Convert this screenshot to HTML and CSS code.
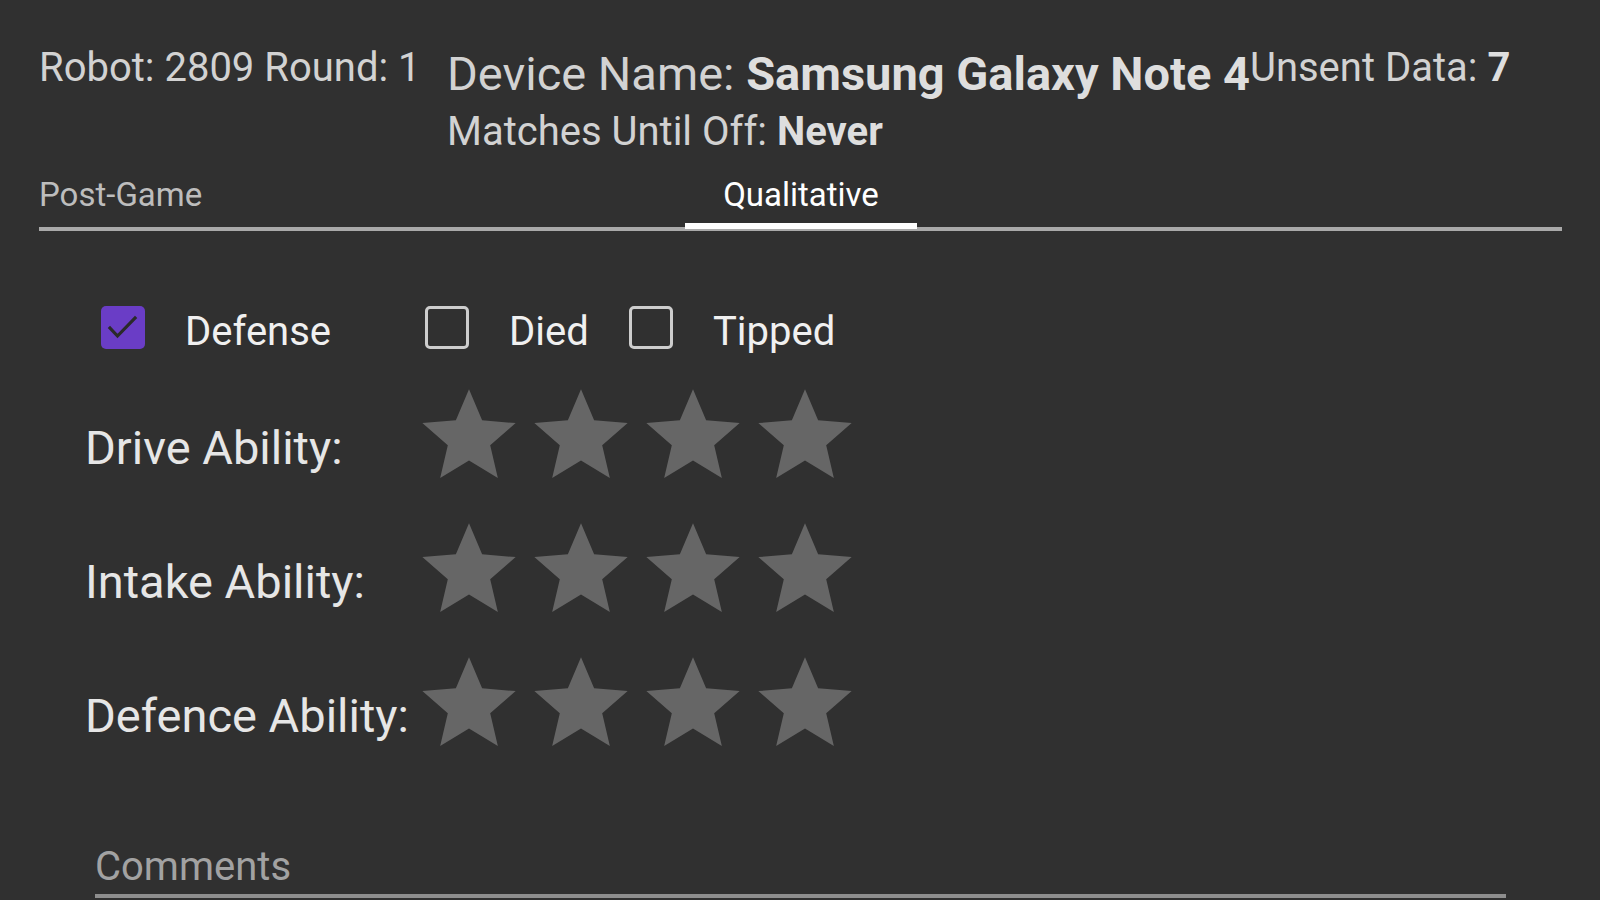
FILE: index.html
```html
<!DOCTYPE html>
<html lang="en">
<head>
<meta charset="utf-8">
<title>Qualitative</title>
<link rel="stylesheet" href="styles.css">
</head>
<body>
<div class="page">
  <header class="header">
    <div class="robot">Robot: 2809 Round: 1</div>
    <div class="device">
      <div class="device-name">Device Name: <b>Samsung Galaxy Note 4</b></div>
      <div class="matches">Matches Until Off: <b>Never</b></div>
    </div>
    <div class="unsent">Unsent Data: <b>7</b></div>
  </header>

  <nav class="tabs">
    <div class="tab tab-first">Post-Game</div>
    <div class="tab tab-active">Qualitative</div>
  </nav>

  <section class="checks">
    <label class="check check-defense">
      <span class="box box-on">
        <svg viewBox="0 0 43 43" width="43" height="43"><polyline points="9,22 16.5,30 34,12" fill="none" stroke="#2a2a2a" stroke-width="3.2" stroke-linecap="square"/></svg>
      </span>
      <span class="check-label">Defense</span>
    </label>
    <label class="check check-died">
      <span class="box"></span>
      <span class="check-label">Died</span>
    </label>
    <label class="check">
      <span class="box"></span>
      <span class="check-label">Tipped</span>
    </label>
  </section>

  <section class="ratings">
    <div class="rating-row">
      <div class="rating-label">Drive Ability:</div>
      <div class="stars">
        <svg class="star" viewBox="0 0 24 24"><path d="M12 17.27L18.18 21l-1.64-7.03L22 9.24l-7.19-.61L12 2 9.19 8.630 2 9.24l5.46 4.73L5.82 21z"/></svg>
        <svg class="star" viewBox="0 0 24 24"><path d="M12 17.27L18.18 21l-1.64-7.03L22 9.24l-7.19-.61L12 2 9.19 8.63 2 9.24l5.46 4.73L5.82 21z"/></svg>
        <svg class="star" viewBox="0 0 24 24"><path d="M12 17.27L18.18 21l-1.64-7.03L22 9.24l-7.19-.61L12 2 9.19 8.63 2 9.24l5.46 4.73L5.82 21z"/></svg>
        <svg class="star" viewBox="0 0 24 24"><path d="M12 17.27L18.18 21l-1.64-7.03L22 9.24l-7.19-.61L12 2 9.19 8.63 2 9.24l5.46 4.73L5.82 21z"/></svg>
      </div>
    </div>
    <div class="rating-row">
      <div class="rating-label">Intake Ability:</div>
      <div class="stars">
        <svg class="star" viewBox="0 0 24 24"><path d="M12 17.27L18.18 21l-1.64-7.03L22 9.24l-7.19-.61L12 2 9.19 8.63 2 9.24l5.46 4.73L5.82 21z"/></svg>
        <svg class="star" viewBox="0 0 24 24"><path d="M12 17.27L18.18 21l-1.64-7.03L22 9.24l-7.19-.61L12 2 9.19 8.63 2 9.24l5.46 4.73L5.82 21z"/></svg>
        <svg class="star" viewBox="0 0 24 24"><path d="M12 17.27L18.18 21l-1.64-7.03L22 9.24l-7.19-.61L12 2 9.19 8.63 2 9.24l5.46 4.73L5.82 21z"/></svg>
        <svg class="star" viewBox="0 0 24 24"><path d="M12 17.27L18.18 21l-1.64-7.03L22 9.24l-7.19-.61L12 2 9.19 8.63 2 9.24l5.46 4.73L5.82 21z"/></svg>
      </div>
    </div>
    <div class="rating-row">
      <div class="rating-label">Defence Ability:</div>
      <div class="stars">
        <svg class="star" viewBox="0 0 24 24"><path d="M12 17.27L18.18 21l-1.64-7.03L22 9.24l-7.19-.61L12 2 9.19 8.63 2 9.24l5.46 4.73L5.82 21z"/></svg>
        <svg class="star" viewBox="0 0 24 24"><path d="M12 17.27L18.18 21l-1.64-7.03L22 9.24l-7.19-.61L12 2 9.19 8.63 2 9.24l5.46 4.73L5.82 21z"/></svg>
        <svg class="star" viewBox="0 0 24 24"><path d="M12 17.27L18.18 21l-1.64-7.03L22 9.24l-7.19-.61L12 2 9.19 8.63 2 9.24l5.46 4.73L5.82 21z"/></svg>
        <svg class="star" viewBox="0 0 24 24"><path d="M12 17.27L18.18 21l-1.64-7.03L22 9.24l-7.19-.61L12 2 9.19 8.63 2 9.24l5.46 4.73L5.82 21z"/></svg>
      </div>
    </div>
  </section>

  <div class="comments">
    <div class="comments-hint">Comments</div>
  </div>
</div>
</body>
</html>
```

FILE: styles.css
```css
html, body {
  margin: 0;
  padding: 0;
  background: #303030;
  height: 100%;
  overflow: hidden;
}

body {
  font-family: Roboto, "Liberation Sans", sans-serif;
  color: #d6d6d6;
}

.page {
  padding: 44px 38px 0 39px;
}

/* Header */
.header {
  display: flex;
  align-items: flex-start;
}

.robot {
  width: 408px;
  flex: none;
  font-size: 40px;
  line-height: 48px;
  color: #d2d2d2;
  white-space: nowrap;
}

.device {
  flex: none;
  margin-top: 2px;
  white-space: nowrap;
}

.device-name {
  font-size: 47px;
  line-height: 56px;
  color: #d2d2d2;
}

.device-name b,
.matches b,
.unsent b {
  font-weight: 700;
  color: #dedede;
}

.matches {
  font-size: 40px;
  line-height: 48px;
  margin-top: 6px;
  color: #d2d2d2;
}

.unsent {
  flex: none;
  font-size: 40px;
  line-height: 48px;
  color: #d2d2d2;
  white-space: nowrap;
}

/* Tabs */
.tabs {
  display: flex;
  margin-top: 19px;
  border-bottom: 4px solid #a9a9a9;
}

.tab {
  font-size: 33px;
  line-height: 40px;
  padding-bottom: 12px;
  white-space: nowrap;
}

.tab-first {
  width: 646px;
  color: #bdbdbd;
}

.tab-active {
  position: relative;
  width: 232px;
  text-align: center;
  color: #ffffff;
}

.tab-active::after {
  content: "";
  position: absolute;
  left: 0;
  right: 0;
  bottom: -2px;
  height: 6px;
  background: #ffffff;
}

/* Checkboxes */
.checks {
  display: flex;
  align-items: center;
  margin-top: 67px;
  margin-left: 62px;
}

.check {
  display: flex;
  align-items: center;
  gap: 40px;
}

.check-defense {
  width: 324px;
}

.check-died {
  width: 204px;
}

.box {
  flex: none;
  box-sizing: border-box;
  width: 44px;
  height: 43px;
  border: 3.5px solid #cdcdcd;
  border-radius: 5px;
}

.box-on {
  border: none;
  background: #6a3dc6;
  display: flex;
}

.check-label {
  font-size: 40px;
  line-height: 48px;
  padding-top: 10px;
  color: #f0f0f0;
}

/* Ratings */
.ratings {
  display: flex;
  flex-direction: column;
  gap: 22px;
  margin-top: 24px;
  margin-left: 46px;
}

.rating-row {
  display: flex;
  align-items: center;
}

.rating-label {
  width: 328px;
  flex: none;
  font-size: 47px;
  line-height: 56px;
  padding-top: 24px;
  color: #e6e6e6;
  white-space: nowrap;
}

.stars {
  display: flex;
}

.star {
  display: block;
  width: 112px;
  height: 112px;
  fill: #666666;
}

/* Comments */
.comments {
  margin-top: 83px;
  margin-left: 56px;
  width: 1411px;
  border-bottom: 4px solid #8e8e8e;
  padding-bottom: 3px;
}

.comments-hint {
  font-size: 40px;
  line-height: 48px;
  color: #a2a2a2;
}
```
